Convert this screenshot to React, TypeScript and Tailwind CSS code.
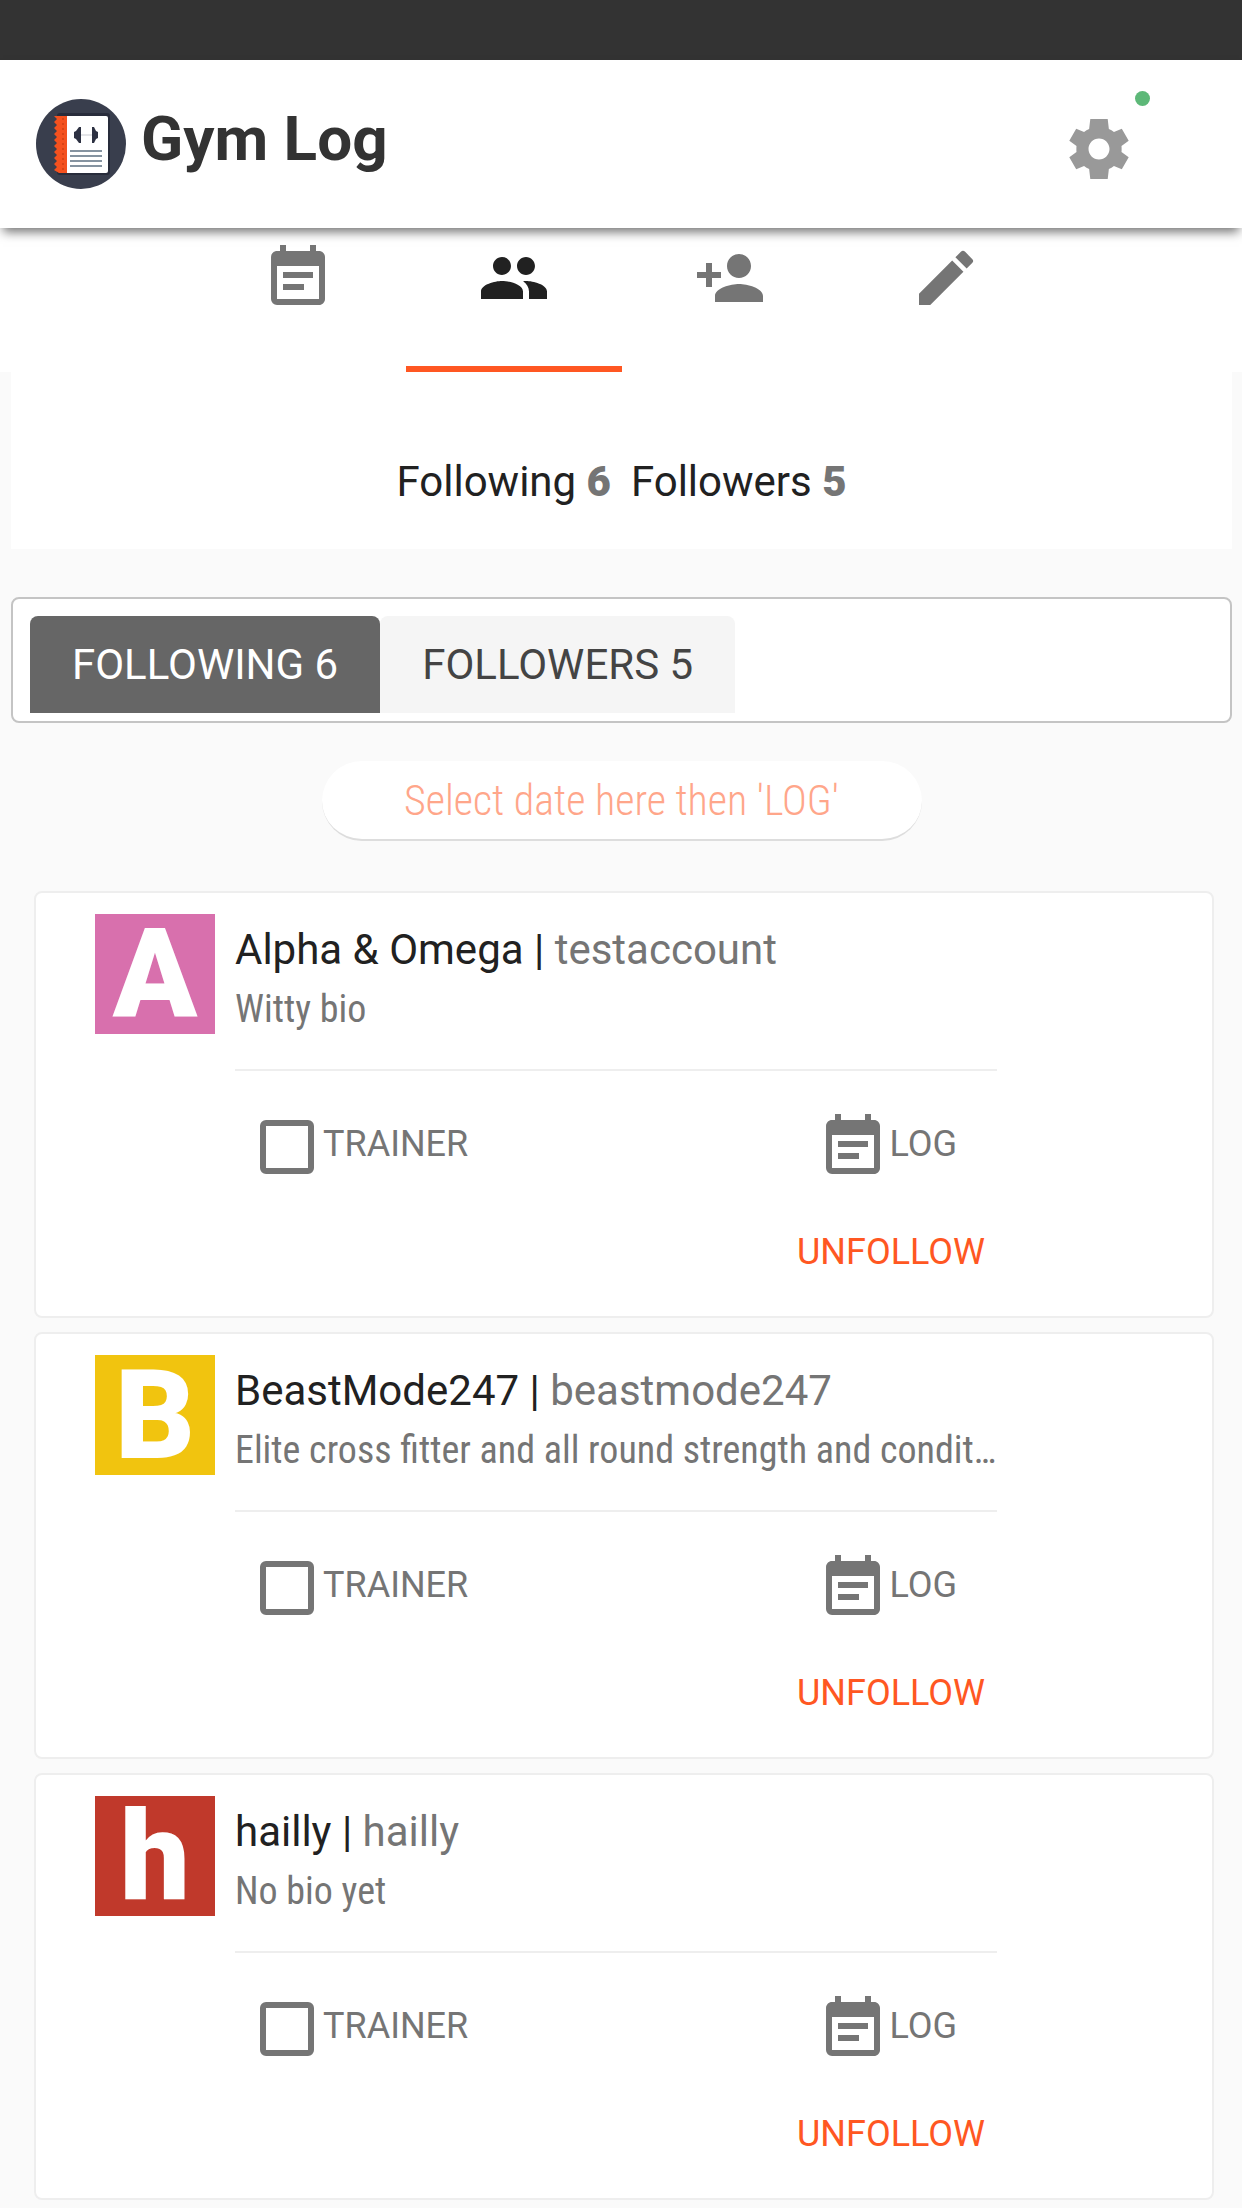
import React, { useState } from 'react';
import { MdEdit, MdEventNote, MdPeople, MdPersonAdd } from 'react-icons/md';

interface Athlete {
  id: number;
  name: string;
  username: string;
  bio: string;
  color: string;
}

const athletes: Athlete[] = [
  { id: 1, name: 'Alpha & Omega', username: 'testaccount', bio: 'Witty bio', color: 'bg-[#d870ad]' },
  {
    id: 2,
    name: 'BeastMode247',
    username: 'beastmode247',
    bio: 'Elite cross fitter and all round strength and condit…',
    color: 'bg-[#f1c40f]',
  },
  { id: 3, name: 'hailly', username: 'hailly', bio: 'No bio yet', color: 'bg-[#c0392b]' },
];

const navItems = [
  { id: 'log', label: 'Log', Icon: MdEventNote },
  { id: 'people', label: 'People', Icon: MdPeople },
  { id: 'add', label: 'Add person', Icon: MdPersonAdd },
  { id: 'edit', label: 'Edit', Icon: MdEdit },
];

const Logo = () => (
  <svg className="size-[90px] shrink-0" viewBox="0 0 90 90" aria-hidden="true">
    <circle cx="45" cy="45" r="45" fill="#393e4d" />
    <rect x="21" y="14" width="53" height="62" rx="3" fill="#282c3b" />
    <path d="M23 17h9v57h-9l-5-3 3-3-3-3 3-3-3-3 3-3-3-3 3-3-3-3 3-3-3-3 3-3-3-3 3-3-3-3 3-3-3-3 3-3-3-3z" fill="#f4511e" />
    <path d="M27 19v53" stroke="#d84315" strokeWidth="2" strokeDasharray="2 3" />
    <path d="M31 17h39a2 2 0 0 1 2 2v53a2 2 0 0 1-2 2H31z" fill="#fff" />
    <path d="M45 28v16h-2l-3-4-2-1v-6l2-1 3-4zM56 28v16h2l2-4 2-1v-6l-2-1-2-4z" fill="#2d3142" />
    <path d="M45 36h11" stroke="#e4e5e8" strokeWidth="2" />
    <path d="M34 52h32M34 57h32M34 62h32M34 67h32" stroke="#8593a0" strokeWidth="2" />
  </svg>
);

const GearIcon = () => (
  <svg className="size-[72px]" viewBox="0 0 24 24" fill="currentColor" aria-hidden="true">
    <path d="M19.5 12.98c.04-.32.04-.64.04-.98s0-.66-.04-.98l2.4-1.78-2.3-4.02-2.62 1.08c-.52-.4-1.08-.73-1.69-.98L14.9 2H9.1l-.39 3.32c-.61.25-1.17.59-1.69.98L4.4 5.22 2.1 9.24l2.4 1.78c-.04.32-.04.65-.04.98s0 .66.04.98l-2.4 1.78 2.3 4.02 2.62-1.08c.52.4 1.08.73 1.69.98L9.1 22h5.8l.39-3.32c.61-.25 1.17-.59 1.69-.98l2.62 1.08 2.3-4.02zM12 15.5c-1.93 0-3.5-1.57-3.5-3.5s1.57-3.5 3.5-3.5 3.5 1.57 3.5 3.5-1.57 3.5-3.5 3.5z" />
  </svg>
);

const AthleteCard = ({ athlete }: { athlete: Athlete }) => (
  <li className="flex gap-5 rounded-lg border-2 border-[#eeeeee] bg-white pt-[21px] pr-[215px] pb-[34px] pl-[59px]">
    <div
      className={`flex size-[120px] shrink-0 items-center justify-center pt-0.5 text-[124px] leading-[120px] font-black text-white ${athlete.color}`}
    >
      {athlete.name[0]}
    </div>
    <div className="min-w-0 flex-1 pt-1.5">
      <h2 className="truncate text-[42px] leading-[60px] text-[#212121]">
        {athlete.name} | <span className="text-[#757575]">{athlete.username}</span>
      </h2>
      <p className="font-['Roboto_Condensed',Roboto,sans-serif] text-[38px] leading-[58px] whitespace-nowrap text-[#757575]">
        {athlete.bio}
      </p>
      <hr className="mt-[31px] border-t-2 border-[#eeeeee]" />
      <div className="mt-10 flex items-start justify-between pr-10 pl-4 text-[36px] leading-[66px] text-[#757575]">
        <label className="flex cursor-pointer items-start">
          <input
            type="checkbox"
            className="m-[9px] size-[54px] appearance-none rounded-md border-[6px] border-[#757575] checked:bg-[#757575]"
          />
          TRAINER
        </label>
        <button className="flex items-start">
          <MdEventNote className="size-[72px]" />
          LOG
        </button>
      </div>
      <div className="mt-[39px] flex justify-end pr-3">
        <button className="text-[36px] leading-[60px] text-[#ff5722]">UNFOLLOW</button>
      </div>
    </div>
  </li>
);

export default function App() {
  const [page, setPage] = useState('people');
  const [list, setList] = useState('following');

  const listTab = (id: string) =>
    `rounded-t-lg px-[42px] text-[42px] leading-[97px] ${
      list === id ? 'bg-[#666666] text-white' : 'bg-[#f5f5f5] text-[#444444]'
    }`;

  return (
    <div className="min-h-screen bg-[#fafafa] pb-2 font-[Roboto,sans-serif]">
      <div className="h-[60px] bg-[#333333]" />
      <header className="relative flex h-[168px] items-center justify-between bg-white pr-[107px] pl-9 shadow-[0_7px_10px_-3px_rgba(0,0,0,0.55)]">
        <div className="flex items-center gap-[15px]">
          <Logo />
          <h1 className="pb-2.5 text-[62px] leading-[72px] font-bold text-[#333333]">Gym Log</h1>
        </div>
        <button aria-label="Settings" className="relative mt-2.5 text-[#999999]">
          <GearIcon />
          <span className="absolute -top-[22px] -right-[15px] size-[15px] rounded-full bg-[#5db878]" />
        </button>
      </header>

      <nav className="flex justify-center bg-white pl-px">
        {navItems.map(({ id, label, Icon }) => (
          <button
            key={id}
            aria-label={label}
            onClick={() => setPage(id)}
            className={`flex h-36 w-[216px] justify-center border-b-[6px] pt-3.5 ${
              page === id ? 'border-[#ff5722] text-[#212121]' : 'border-transparent text-[#757575]'
            }`}
          >
            <Icon className="size-[72px]" />
          </button>
        ))}
      </nav>

      <main className="pr-2.5 pl-[11px]">
        <section className="flex justify-center gap-5 bg-white pt-20 pb-[37px] text-[42px] leading-[60px] text-[#212121]">
          <p>
            Following <b className="font-black text-[#757575]">6</b>
          </p>
          <p>
            Followers <b className="font-black text-[#757575]">5</b>
          </p>
        </section>

        <div className="mt-12 flex rounded-lg border-2 border-[#c4c4c4] bg-white px-[17px] pt-[17px] pb-2">
          <button onClick={() => setList('following')} className={listTab('following')}>
            FOLLOWING 6
          </button>
          <button onClick={() => setList('followers')} className={listTab('followers')}>
            FOLLOWERS 5
          </button>
        </div>

        <div className="mt-[38px] flex justify-center">
          <input
            type="text"
            aria-label="Log date"
            placeholder="Select date here then 'LOG'"
            className="h-20 w-[600px] rounded-full border-b-2 border-[#dddddd] bg-white text-center font-['Roboto_Condensed',Roboto,sans-serif] text-[42px] font-light text-[#ff5722] placeholder:text-[#ffa68a]"
          />
        </div>

        <ul className="mt-[50px] flex flex-col gap-3.5 pr-[18px] pl-[23px]">
          {athletes.map((athlete) => (
            <AthleteCard key={athlete.id} athlete={athlete} />
          ))}
        </ul>
      </main>
    </div>
  );
}
